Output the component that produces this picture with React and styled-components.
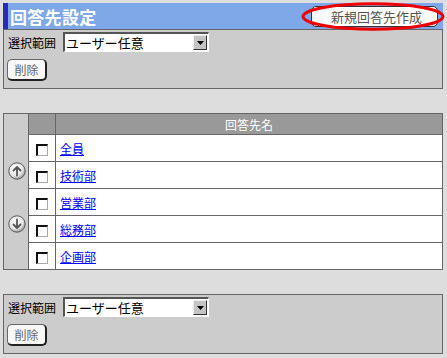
import React from "react";
import styled, { createGlobalStyle } from "styled-components";

const GlobalStyle = createGlobalStyle`
    body {
        margin: 0;
        background: #dddddd;
        font-family: "Noto Sans CJK JP", "Noto Sans", sans-serif;
        font-size: 12px;
        color: #000;
    }
`;

const members = ["全員", "技術部", "営業部", "総務部", "企画部"];

const ArrowIcon = ({ down }) => (
    <svg width="18" height="18" viewBox="0 0 18 18">
        <defs>
            <radialGradient id={down ? "gd" : "gu"} cx="40%" cy="35%" r="65%">
                <stop offset="0%" stopColor="#ffffff" />
                <stop offset="70%" stopColor="#e4e4e4" />
                <stop offset="100%" stopColor="#9a9a9a" />
            </radialGradient>
        </defs>
        <circle cx="9" cy="9" r="8.2" fill={`url(#${down ? "gd" : "gu"})`} stroke="#5a5a5a" strokeWidth="1" />
        {down ? (
            <path d="M9 4.5 V13 M5.5 9.5 L9 13 L12.5 9.5" fill="none" stroke="#555" strokeWidth="1.8" strokeLinecap="round" strokeLinejoin="round" />
        ) : (
            <path d="M9 13.5 V5 M5.5 8.5 L9 5 L12.5 8.5" fill="none" stroke="#555" strokeWidth="1.8" strokeLinecap="round" strokeLinejoin="round" />
        )}
    </svg>
);

const RangeFilter = () => (
    <Panel>
        <FieldRow>
            <Label>選択範囲</Label>
            <FakeSelect>
                <span>ユーザー任意</span>
                <DropButton>
                    <svg width="7" height="4" viewBox="0 0 7 4">
                        <path d="M0 0 H7 L3.5 4 Z" fill="#000" />
                    </svg>
                </DropButton>
            </FakeSelect>
        </FieldRow>
        <DeleteButton>削除</DeleteButton>
    </Panel>
);

const App = () => {
    return (
        <>
            <GlobalStyle />
            <Page>
                <TitleBar>
                    <Title>回答先設定</Title>
                    <NewButton>新規回答先作成</NewButton>
                    <Highlight width="146" height="30" viewBox="0 0 146 30">
                        <ellipse cx="72" cy="14.5" rx="70" ry="12.8" fill="none" stroke="#ee0000" strokeWidth="3" />
                    </Highlight>
                </TitleBar>
                <RangeFilter />
                <ListTable>
                    <tbody>
                        <tr>
                            <SideCell rowSpan={6}>
                                <ArrowStack>
                                    <ArrowIcon />
                                    <ArrowIcon down />
                                </ArrowStack>
                            </SideCell>
                            <HeadCell />
                            <HeadCell>回答先名</HeadCell>
                        </tr>
                        {members.map((name, index) => (
                            <tr key={index}>
                                <CheckCell>
                                    <CheckBox />
                                </CheckCell>
                                <NameCell>
                                    <a href="#">{name}</a>
                                </NameCell>
                            </tr>
                        ))}
                    </tbody>
                </ListTable>
                <RangeFilter />
            </Page>
        </>
    );
};

const Page = styled.div`
    width: 440px;
    padding: 3px 5px 0 3px;
    display: flex;
    flex-direction: column;
`;

const TitleBar = styled.div`
    position: relative;
    height: 26px;
    box-sizing: border-box;
    background: #7ea8e8;
    border-left: 5px solid #2b2bb8;
    display: flex;
    align-items: center;
    justify-content: space-between;
    padding: 0 5px 0 2px;
`;

const Title = styled.div`
    color: #fff;
    font-size: 17px;
    font-weight: bold;
    letter-spacing: 0.3px;
`;

const NewButton = styled.div`
    width: 127px;
    height: 21px;
    box-sizing: border-box;
    margin-top: 1px;
    border: 1px solid #333;
    border-radius: 5px;
    background: #fff;
    color: #555;
    font-size: 13px;
    display: flex;
    align-items: center;
    justify-content: center;
    padding-left: 4px;
`;

const Highlight = styled.svg`
    position: absolute;
    right: -4px;
    top: -1px;
`;

const Panel = styled.div`
    height: 60px;
    box-sizing: border-box;
    border: 1px solid #666;
    background: #cccccc;
    padding: 2px 4px 0 4px;
    display: flex;
    flex-direction: column;
    align-items: flex-start;
    gap: 7px;
`;

const FieldRow = styled.div`
    display: flex;
    align-items: center;
    height: 20px;
`;

const Label = styled.span`
    font-size: 12px;
    margin-right: 7px;
`;

const FakeSelect = styled.div`
    width: 146px;
    height: 20px;
    box-sizing: border-box;
    background: #fff;
    border-top: 2px solid #555;
    border-left: 2px solid #555;
    border-right: 1px solid #fff;
    border-bottom: 1px solid #fff;
    display: flex;
    align-items: center;
    justify-content: space-between;
    padding: 0 1px 0 1px;
    font-size: 13px;
`;

const DropButton = styled.div`
    width: 14px;
    height: 15px;
    box-sizing: border-box;
    background: #c4c4c4;
    border-top: 1px solid #eee;
    border-left: 1px solid #eee;
    border-right: 1px solid #333;
    border-bottom: 1px solid #333;
    display: flex;
    align-items: center;
    justify-content: center;
`;

const DeleteButton = styled.div`
    width: 40px;
    height: 22px;
    box-sizing: border-box;
    margin-left: -1px;
    border: 1px solid #666;
    border-right: 2px solid #222;
    border-bottom: 2px solid #222;
    border-radius: 5px;
    background: #f8f8f8;
    color: #666;
    font-size: 12px;
    display: flex;
    align-items: center;
    justify-content: center;
`;

const ListTable = styled.table`
    width: 440px;
    border-collapse: collapse;
    border: 1px solid #666;
    margin: 24px 0;
    background: #fff;
`;

const SideCell = styled.td`
    width: 24px;
    padding: 0;
    background: #cccccc;
    border: 1px solid #666;
    vertical-align: top;
`;

const ArrowStack = styled.div`
    display: flex;
    flex-direction: column;
    align-items: center;
    gap: 35px;
    padding-top: 48px;
    padding-left: 1px;
`;

const HeadCell = styled.td`
    height: 20px;
    padding: 0;
    background: #999999;
    color: #fff;
    font-size: 12px;
    text-align: center;
    border: 1px solid #666;
    &:nth-child(2) {
        width: 26px;
    }
`;

const CheckCell = styled.td`
    height: 26px;
    padding: 0;
    text-align: center;
    vertical-align: middle;
    border: 1px solid #666;
`;

const CheckBox = styled.span`
    display: inline-block;
    vertical-align: middle;
    width: 12px;
    height: 12px;
    box-sizing: border-box;
    background: #fff;
    border-top: 2px solid #111;
    border-left: 2px solid #111;
    border-right: 1px solid #aaa;
    border-bottom: 1px solid #aaa;
`;

const NameCell = styled.td`
    padding: 0 0 0 4px;
    border: 1px solid #666;
    font-size: 12px;
    a {
        color: #0000ff;
        text-decoration: underline;
    }
`;

export default App;
